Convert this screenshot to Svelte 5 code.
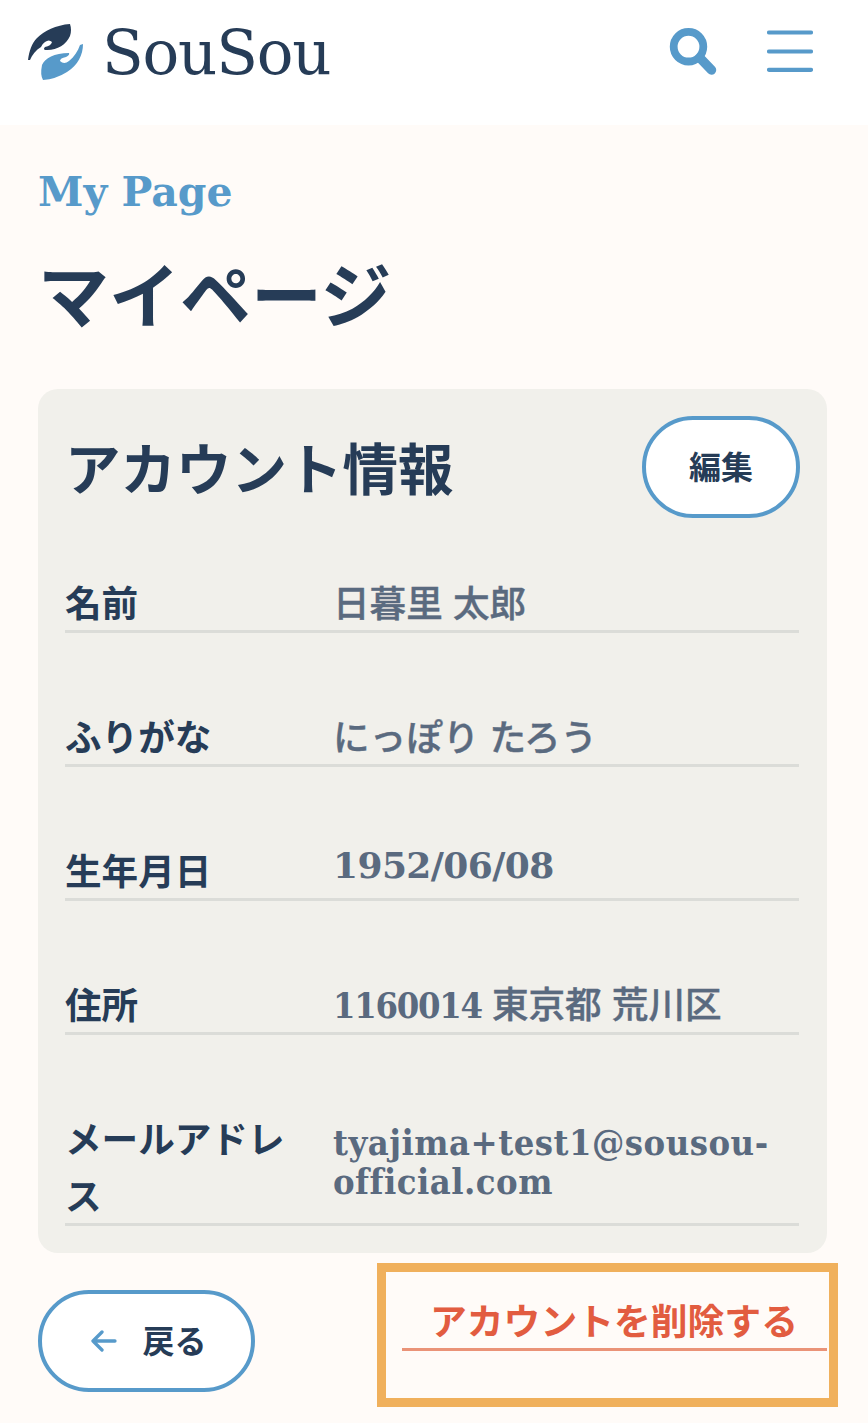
<script>
	const rows = [
		{ label: "名前", value: "日暮里 太郎" },
		{ label: "ふりがな", value: "にっぽり たろう" },
		{ label: "生年月日", value: "1952/06/08", kind: "date" },
		{ label: "住所", zip: "1160014", value: "東京都 荒川区" },
		{ label: "メールアドレス", value: "tyajima+test1@sousou-official.com", kind: "mail" },
	];
</script>

<header>
	<a class="logo" href="#top">
		<svg width="56" height="58" viewBox="0 0 56 58">
			<path fill="#263c57" d="M0 37C1 28 4 20 9 15C16 8 28 2 42 1Q44 7 42 13C38 22 28 28 17 27Q15 26 17 24Q23 23 24 19Q21 16 17 19Q14 21 13 24C8 27 4 32 2 37Z" />
			<path fill="#579aca" d="M55 21C55 32 50 42 39 49Q28 56 15 57Q12 52 14 42C17 35 26 30 41 30Q42 32 38 34Q32 35 32 38Q36 42 41 38C46 34 50 28 52 22Z" />
		</svg>
		<span>SouSou</span>
	</a>
	<nav>
		<button class="icon" aria-label="検索">
			<svg width="48" height="48" viewBox="0 0 48 48" fill="none" stroke="#579aca">
				<circle cx="19.5" cy="18.7" r="14.8" stroke-width="7.8" />
				<path d="M31 30L42.5 42" stroke-width="9.5" stroke-linecap="round" />
			</svg>
		</button>
		<button class="icon" aria-label="メニュー">
			<svg width="46" height="44" viewBox="0 0 46 44" stroke="#579aca" stroke-width="4.2" stroke-linecap="round">
				<path d="M2 4.5H44M2 23.5H44M2 41.8H44" />
			</svg>
		</button>
	</nav>
</header>

<main>
	<p class="en">My Page</p>
	<h1>マイページ</h1>

	<section class="card">
		<div class="card-head">
			<h2>アカウント情報</h2>
			<button class="pill edit">編集</button>
		</div>
		<dl>
			{#each rows as row}
				<div class="row">
					<dt>{row.label}</dt>
					<dd class={row.kind}>{#if row.zip}<span class="zip">{row.zip}</span>{" "}{/if}{row.value}</dd>
				</div>
			{/each}
		</dl>
	</section>

	<div class="actions">
		<button class="pill back">
			<svg width="26" height="22" viewBox="0 0 26 22" fill="none" stroke="#579aca" stroke-width="3.3" stroke-linecap="round" stroke-linejoin="round">
				<path d="M24 11H2M11 2L2 11L11 20" />
			</svg>
			戻る
		</button>
		<div class="highlight">
			<a class="delete" href="#delete">アカウントを削除する</a>
		</div>
	</div>
</main>

<style>
	:global(body) {
		background: #fffbf8;
		color: #263c57;
		font-family: "Noto Sans CJK JP", sans-serif;
	}
	header {
		height: 125px;
		box-sizing: border-box;
		padding: 23px 55px 0 28px;
		display: flex;
		justify-content: space-between;
		align-items: flex-start;
		background: #fff;
	}
	.logo {
		display: flex;
		gap: 18px;
		color: #263c57;
		text-decoration: none;
	}
	.logo span {
		font: 61px/60px "DejaVu Serif", serif;
		letter-spacing: -1.2px;
	}
	nav {
		display: flex;
		gap: 50px;
		padding-top: 5px;
	}
	.icon {
		padding: 0;
		border: 0;
		background: none;
		display: flex;
	}
	main {
		padding: 43px 30px 0 38px;
	}
	.en {
		margin: 0;
		font: bold 41px/48px "DejaVu Serif", serif;
		color: #579aca;
	}
	h1 {
		margin: 25px 0 0;
		font-size: 71px;
		line-height: 100px;
		font-weight: 700;
	}
	.card {
		width: 789px;
		height: 864px;
		box-sizing: border-box;
		margin-top: 48px;
		padding: 27px 27px 0 27px;
		border-radius: 20px;
		background: #f1f0eb;
	}
	.card-head {
		display: flex;
		justify-content: space-between;
		align-items: center;
	}
	h2 {
		margin: 0;
		padding-bottom: 3px;
		font-size: 55.5px;
		font-weight: 700;
	}
	.pill {
		box-sizing: border-box;
		height: 102px;
		padding: 0 0 4px;
		border: 4px solid #579aca;
		border-radius: 51px;
		background: #fff;
		color: #263c57;
		font: 700 32px/1 "Noto Sans CJK JP", sans-serif;
	}
	.edit {
		width: 158px;
	}
	dl {
		margin: 55px 1px 0 0;
		display: grid;
		gap: 74px;
	}
	.row {
		display: grid;
		grid-template-columns: 240px 1fr;
		column-gap: 28px;
		align-items: center;
		border-bottom: 3px solid #dbdcd8;
	}
	dt {
		font-size: 36.6px;
		line-height: 57px;
		font-weight: 700;
	}
	dd {
		margin: 0;
		font-size: 36.6px;
		line-height: 39px;
		font-weight: 500;
		word-spacing: 2px;
		-webkit-text-stroke: 0.4px #5a6a7f;
		color: #5a6a7f;
	}
	.zip, .date, .mail {
		font-family: "DejaVu Serif Condensed", "DejaVu Serif", serif;
		font-stretch: condensed;
		font-size: 36px;
		font-weight: 700;
		-webkit-text-stroke: 0;
	}
	.zip {
		letter-spacing: -1.3px;
	}
	.date {
		padding-bottom: 9px;
		font-family: "DejaVu Serif", serif;
		font-stretch: normal;
		letter-spacing: -0.6px;
	}
	.mail {
		padding-bottom: 8px;
		letter-spacing: 0.5px;
	}
	.actions {
		display: flex;
		justify-content: space-between;
		align-items: flex-start;
		padding-top: 10px;
	}
	.back {
		width: 217px;
		margin-top: 27px;
		padding-left: 5px;
		display: flex;
		align-items: center;
		justify-content: center;
		gap: 25px;
	}
	.back svg {
		margin-top: 4px;
	}
	.highlight {
		box-sizing: border-box;
		width: 461px;
		height: 144px;
		padding: 20px 2px 0 16px;
		border: 9px solid #f0b05c;
	}
	.delete {
		display: block;
		border-bottom: 3px solid #ea9378;
		padding: 0 0 2px 28px;
		color: #e25c40;
		font-size: 36.8px;
		line-height: 54px;
		font-weight: 700;
		text-decoration: none;
	}
</style>
